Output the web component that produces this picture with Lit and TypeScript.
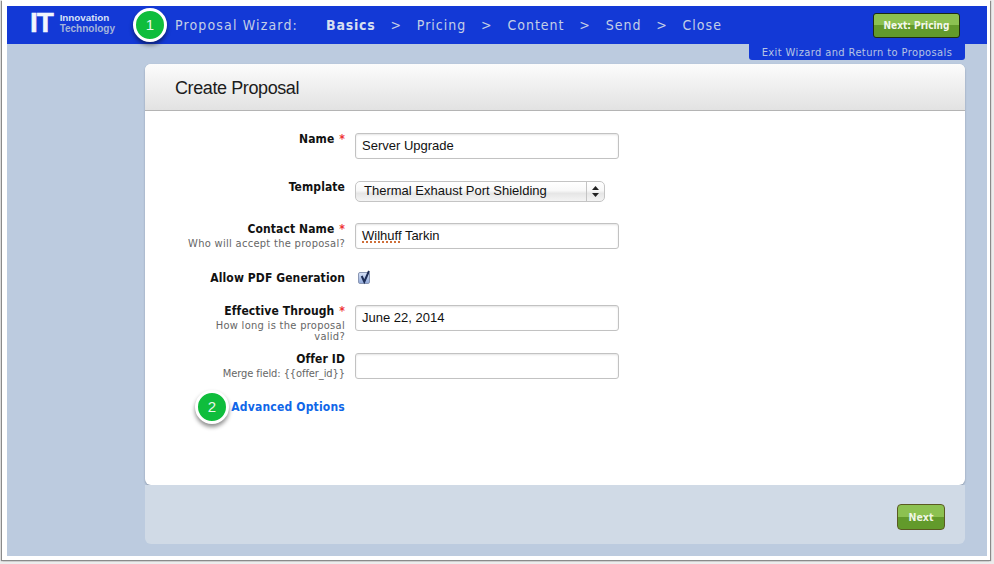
import { LitElement, html, css } from "lit";
import { customElement } from "lit/decorators.js";

@customElement("app-root")
export class AppRoot extends LitElement {
  static styles = css`
    :host { display: block; width: 994px; height: 564px; overflow: hidden; background: #ececec; position: relative; font-family: "DejaVu Sans", sans-serif; }
    * { box-sizing: border-box; }
    .frame { width: 988px; height: 560px; margin-left: 2px; background: #fff; padding: 6px 3px 0 5px; box-shadow: -1px 1px 1px #8a8a8a, 1px 1px 1px #8a8a8a; }
    .screen { height: 550px; background: #bccbdf; display: flex; flex-direction: column; }
    .bar { height: 38px; background: #1339d6; display: flex; align-items: center; padding-left: 23px; color: #c3cfe6; flex: none; }
    .logo { width: 85px; display: flex; align-items: center; gap: 4px; flex: none; margin-top: -4px; }
    .it { font: bold 28px/24px "Liberation Sans", sans-serif; color: #f2f5fd; width: 28px; letter-spacing: -1px; -webkit-text-stroke: 0.5px #f2f5fd; }
    .co { font: bold 9.8px/11px "Liberation Sans", sans-serif; color: #d9e2f6; }
    .co div + div { color: #a4b4da; font-size: 10px; }
    .wizard { margin-left: 60px; font: 14px "DejaVu Sans Condensed", sans-serif; letter-spacing: 1.15px; width: 151px; flex: none; white-space: nowrap; }
    nav { display: flex; font: 14px "DejaVu Sans Condensed", sans-serif; letter-spacing: 1px; gap: 14.8px; white-space: nowrap; }
    nav b { font-weight: 700; letter-spacing: 0.8px; color: #d6dff0; }
    .next-top { margin-left: auto; margin-right: 27px; width: 87px; height: 25px; border: 1px solid #1d2c12; border-radius: 3px; background: linear-gradient(#8cc151 0 50%, #629a2b 50% 100%); color: #f4f8ee; font: bold 10px/23px "DejaVu Sans Condensed", sans-serif; text-align: center; }
    .exit-row { display: flex; justify-content: flex-end; padding-right: 22px; flex: none; }
    .exit { width: 216px; height: 16px; background: #1339d6; color: #b6c4e4; border-radius: 0 0 3px 3px; font: 11px/17px "DejaVu Sans Condensed", sans-serif; letter-spacing: 0.4px; text-align: center; }
    .card-wrap { margin: 4px 22px 0 138px; }
    .card { height: 421px; background: #fff; border-radius: 6px; box-shadow: 0 1px 2px #8896a8; overflow: hidden; }
    .head { height: 47px; background: linear-gradient(#fcfcfc, #e2e2e2); border-bottom: 1px solid #b4b4b4; padding-left: 30px; font: 18px/48px "Liberation Sans", sans-serif; color: #1c1c1c; letter-spacing: -0.4px; }
    .foot { height: 59px; background: #d0dae6; border-radius: 0 0 6px 6px; display: flex; justify-content: flex-end; padding: 19px 20px 0 0; }
    .next { width: 48px; height: 26px; border: 1px solid #5a5a22; border-radius: 4px; background: linear-gradient(#8cc151 0 50%, #629a2b 50% 100%); color: #eef5e4; font: bold 10.5px/24px "DejaVu Sans Condensed", sans-serif; text-align: center; }
    form { display: flex; flex-direction: column; }
    .row { display: grid; grid-template-columns: 200px 264px; column-gap: 10px; }
    .lbl { text-align: right; font: bold 12px/15px "DejaVu Sans Condensed", sans-serif; letter-spacing: 0.1px; color: #111; white-space: nowrap; margin-top: -1.5px; }
    .lbl i { font-style: normal; color: #e33; margin-left: 1px; }
    .hint { text-align: right; font: 11px/11px "DejaVu Sans Condensed", sans-serif; color: #666; letter-spacing: 0.3px; margin-top: 1px; }
    .hint.wrap { padding-left: 60px; }
    .hint.merge { letter-spacing: -0.08px; }
    .input { height: 26px; border: 1px solid #c2c2c2; border-radius: 3px; background: #fff; box-shadow: inset 0 1px 2px #e4e4e4; font: 13px/24px "Liberation Sans", sans-serif; color: #111; padding-left: 6px; }
    .squig { text-decoration: underline dotted #d0703a 1.5px; text-decoration-skip-ink: none; text-underline-offset: 1px; }
    .select { width: 250px; height: 21px; border: 1px solid #c4c4c4; border-radius: 5px; background: linear-gradient(#fff, #f8f8f8 45%, #e6e6e6 60%, #f4f4f4); font: 13px/18px "Liberation Sans", sans-serif; color: #111; padding-left: 8px; display: flex; justify-content: space-between; }
    .arrows { width: 18px; border-left: 1px solid #c4c4c4; display: flex; align-items: center; justify-content: center; }
    .check { width: 12px; height: 12px; margin-left: 3px; border: 1px solid #8a97b4; border-radius: 2px; background: linear-gradient(#d6e1f6, #93abda); position: relative; }
    .check svg { position: absolute; left: -1px; top: -4px; overflow: visible; }
    .adv { font: bold 12px/15px "DejaVu Sans Condensed", sans-serif; letter-spacing: 0.2px; color: #0f66e8; text-align: right; }
    .pin { position: absolute; border-radius: 50%; background: #0fbd3c; border: 3px solid #fff; box-shadow: 0 3px 4px rgba(0,0,0,.45); color: #eaf8ec; font: 15px/28px "Liberation Sans", sans-serif; text-align: center; width: 34px; height: 34px; }
    .p1 { left: 133px; top: 8px; }
    .p2 { left: 195px; top: 390px; }
  `;

  render() {
    return html`
      <div class="frame"><div class="screen">
        <div class="bar">
          <div class="logo"><div class="it">IT</div><div class="co"><div>Innovation</div><div>Technology</div></div></div>
          <div class="wizard">Proposal Wizard:</div>
          <nav><b>Basics</b><span>&gt;</span><span>Pricing</span><span>&gt;</span><span>Content</span><span>&gt;</span><span>Send</span><span>&gt;</span><span>Close</span></nav>
          <div class="next-top">Next: Pricing</div>
        </div>
        <div class="exit-row"><div class="exit">Exit Wizard and Return to Proposals</div></div>
        <div class="card-wrap">
          <div class="card">
            <div class="head">Create Proposal</div>
            <form>
              <div class="row" style="margin-top:22px"><div class="lbl">Name <i>*</i></div><div class="input">Server Upgrade</div></div>
              <div class="row" style="margin-top:22px"><div class="lbl">Template</div><div class="select">Thermal Exhaust Port Shielding<span class="arrows"><svg width="7" height="11" viewBox="0 0 7 11"><path d="M3.500 0 7 4H0zM0 7h7l-3.500 4z" fill="#222"/></svg></span></div></div>
              <div class="row" style="margin-top:21px"><div><div class="lbl">Contact Name <i>*</i></div><div class="hint">Who will accept the proposal?</div></div><div class="input"><span class="squig">Wilhuff</span> Tarkin</div></div>
              <div class="row" style="margin-top:23px"><div class="lbl">Allow PDF Generation</div><div class="check"><svg width="14" height="17" viewBox="0 0 14 17"><path d="M3.700 7 6.300 12.700 11 2" fill="none" stroke="#1c2c55" stroke-width="2"/></svg></div></div>
              <div class="row" style="margin-top:19.5px"><div><div class="lbl">Effective Through <i>*</i></div><div class="hint wrap">How long is the proposal valid?</div></div><div class="input">June 22, 2014</div></div>
              <div class="row" style="margin-top:11.5px"><div><div class="lbl">Offer ID</div><div class="hint merge">Merge field: {{offer_id}}</div></div><div class="input"></div></div>
              <div class="row" style="margin-top:21px"><div class="adv">Advanced Options</div><div></div></div>
            </form>
          </div>
          <div class="foot"><div class="next">Next</div></div>
        </div>
      </div></div>
      <div class="pin p1">1</div>
      <div class="pin p2">2</div>
    `;
  }
}
